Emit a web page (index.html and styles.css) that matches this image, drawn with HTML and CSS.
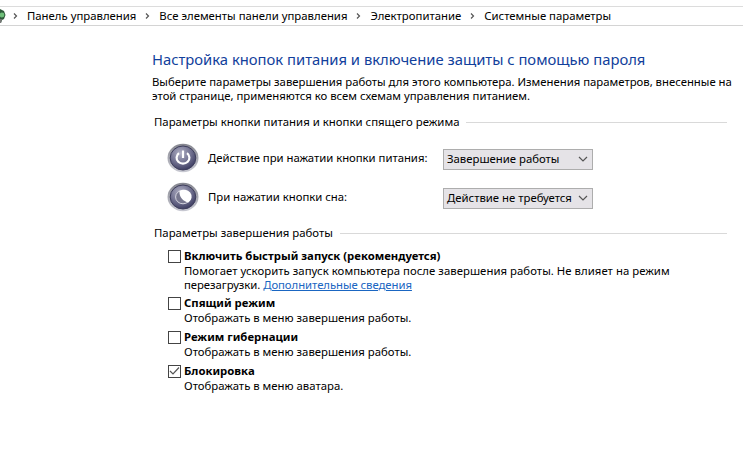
FILE: index.html
```html
<!DOCTYPE html>
<html lang="ru">
<head>
	<meta charset="utf-8">
	<title>Системные параметры</title>
	<link rel="stylesheet" href="styles.css">
</head>
<body>
	<nav class="path">
		<svg class="path-icon" width="6" height="16" viewBox="0 0 6 16">
			<path d="M0 1 L4 3 L5.5 7 L4 11 L2 12 L1 15 L0 15 Z" fill="#2e5a3a"/>
			<circle cx="2" cy="7" r="2.4" fill="#6fc07a"/>
			<path d="M0 11 L2 11 L1 15 L0 15 Z" fill="#777"/>
		</svg>
		<svg class="sep first" width="5" height="8" viewBox="0 0 5 8"><path d="M1 1.5 L3.5 4 L1 6.5"/></svg>
		<span>Панель управления</span>
		<svg class="sep" width="5" height="8" viewBox="0 0 5 8"><path d="M1 1.5 L3.5 4 L1 6.5"/></svg>
		<span>Все элементы панели управления</span>
		<svg class="sep" width="5" height="8" viewBox="0 0 5 8"><path d="M1 1.5 L3.5 4 L1 6.5"/></svg>
		<span>Электропитание</span>
		<svg class="sep" width="5" height="8" viewBox="0 0 5 8"><path d="M1 1.5 L3.5 4 L1 6.5"/></svg>
		<span>Системные параметры</span>
	</nav>

	<main class="page">
		<h1>Настройка кнопок питания и включение защиты с помощью пароля</h1>
		<p class="intro">Выберите параметры завершения работы для этого компьютера. Изменения параметров, внесенные на<br>этой странице, применяются ко всем схемам управления питанием.</p>

		<h2>Параметры кнопки питания и кнопки спящего режима</h2>
		<div class="row">
			<svg class="round" width="32" height="30" viewBox="0 0 32 30">
				<defs>
					<linearGradient id="ring" x1="0" y1="0" x2="0" y2="1">
						<stop offset="0" stop-color="#85868f"/>
						<stop offset="1" stop-color="#c9cad3"/>
					</linearGradient>
					<radialGradient id="ball" cx="0.4" cy="0.3" r="0.75">
						<stop offset="0" stop-color="#b0b0c4"/>
						<stop offset="0.55" stop-color="#717190"/>
						<stop offset="1" stop-color="#37375c"/>
					</radialGradient>
				</defs>
				<ellipse cx="16" cy="15" rx="15.5" ry="14.3" fill="url(#ring)"/>
				<ellipse cx="16" cy="15" rx="12.8" ry="12" fill="url(#ball)" stroke="#3e3e5c"/>
				<path d="M12 10.2 A6.4 5.8 0 1 0 20 10.2" fill="none" stroke="#fff" stroke-width="2.2"/>
				<path d="M16 7.5 V15" stroke="#fff" stroke-width="2.2"/>
			</svg>
			<label for="power">Действие при нажатии кнопки питания:</label>
			<div class="select" id="power">Завершение работы
				<svg width="10" height="6" viewBox="0 0 10 6"><path d="M1 1 L5 5 L9 1"/></svg>
			</div>
		</div>
		<div class="row">
			<svg class="round" width="32" height="30" viewBox="0 0 32 30">
				<ellipse cx="16" cy="15" rx="15.5" ry="14.3" fill="url(#ring)"/>
				<ellipse cx="16" cy="15" rx="12.8" ry="12" fill="url(#ball)" stroke="#3e3e5c"/>
				<ellipse cx="16" cy="15" rx="7.4" ry="6.8" fill="#77778f" stroke="#d4d4de"/>
				<path d="M12.5 9 A7.4 6.8 0 1 1 21.5 20.4 C16 19.5 12 15 12.5 9 Z" fill="#fff"/>
			</svg>
			<label for="sleep">При нажатии кнопки сна:</label>
			<div class="select" id="sleep">Действие не требуется
				<svg width="10" height="6" viewBox="0 0 10 6"><path d="M1 1 L5 5 L9 1"/></svg>
			</div>
		</div>

		<h2 class="second">Параметры завершения работы</h2>
		<ul class="options">
			<li>
				<span class="box"></span>
				<div>
					<b>Включить быстрый запуск (рекомендуется)</b>
					<p class="long">Помогает ускорить запуск компьютера после завершения работы. Не влияет на режим</p>
					<p class="more">перезагрузки. <a href="#">Дополнительные сведения</a></p>
				</div>
			</li>
			<li>
				<span class="box"></span>
				<div>
					<b>Спящий режим</b>
					<p>Отображать в меню завершения работы.</p>
				</div>
			</li>
			<li>
				<span class="box"></span>
				<div>
					<b>Режим гибернации</b>
					<p>Отображать в меню завершения работы.</p>
				</div>
			</li>
			<li>
				<span class="box">
					<svg width="11" height="10" viewBox="0 0 11 10"><path d="M1 5 L4 8 L10 1.5"/></svg>
				</span>
				<div>
					<b>Блокировка</b>
					<p>Отображать в меню аватара.</p>
				</div>
			</li>
		</ul>
	</main>
</body>
</html>
```
FILE: styles.css
```css
body {
	margin: 0;
	padding-top: 6px;
	background: #fff;
	color: #000;
	font: 11.35px/14px "Noto Sans", sans-serif;
	white-space: nowrap;
}
h1, h2, p, ul {
	margin: 0;
	padding: 0;
	font-weight: normal;
}
svg {
	display: block;
	flex: none;
}
.path {
	display: flex;
	align-items: center;
	height: 18px;
	border-top: 1px solid #dcdcdc;
	border-bottom: 1px solid #d4d4d4;
}
.sep {
	margin: 0 9px;
}
.sep.first {
	margin-left: 7px;
}
.sep path, .select path, .box path {
	fill: none;
	stroke: #555;
	stroke-width: 1.2;
}
.page {
	width: 575px;
	padding: 23px 0 0 152px;
}
h1 {
	font-size: 14.8px;
	line-height: 20px;
	letter-spacing: -0.01px;
	color: #123f9c;
}
.intro {
	margin-top: 6px;
	line-height: 13.5px;
	letter-spacing: -0.01px;
}
h2 {
	display: flex;
	align-items: center;
	margin: 13px 0 0 2px;
	font-size: 11.4px;
	line-height: 14px;
}
h2::after {
	content: "";
	flex: 1;
	height: 1px;
	margin-left: 7px;
	background: #d9d9d9;
}
.row {
	display: flex;
	align-items: center;
	height: 39px;
	padding-left: 15px;
}
h2 + .row {
	margin-top: 9px;
}
.row label {
	width: 235px;
	margin-left: 9px;
	letter-spacing: -0.03px;
}
.round {
	margin-top: 1px;
}
.select {
	display: flex;
	align-items: center;
	justify-content: space-between;
	box-sizing: border-box;
	width: 150px;
	height: 21px;
	margin-top: 3px;
	padding: 0 4px 1px 3px;
	border: 1px solid #adadad;
	background: #e5e3e7;
}
h2.second {
	margin-top: 10px;
}
.options {
	margin: 8px 0 0 16px;
	list-style: none;
}
.options li {
	display: flex;
	margin-bottom: 4px;
}
.options b {
	display: block;
	line-height: 16px;
}
.options p {
	line-height: 14px;
}
.options p.long {
	letter-spacing: 0.04px;
}
.options p.more {
	letter-spacing: -0.06px;
}
.options a {
	color: #1a66c2;
}
.options li:first-child {
	margin-bottom: 3px;
}
.box {
	box-sizing: border-box;
	width: 13px;
	height: 13px;
	margin: 2px 3px 0 0;
	border: 1px solid #444;
}
```
